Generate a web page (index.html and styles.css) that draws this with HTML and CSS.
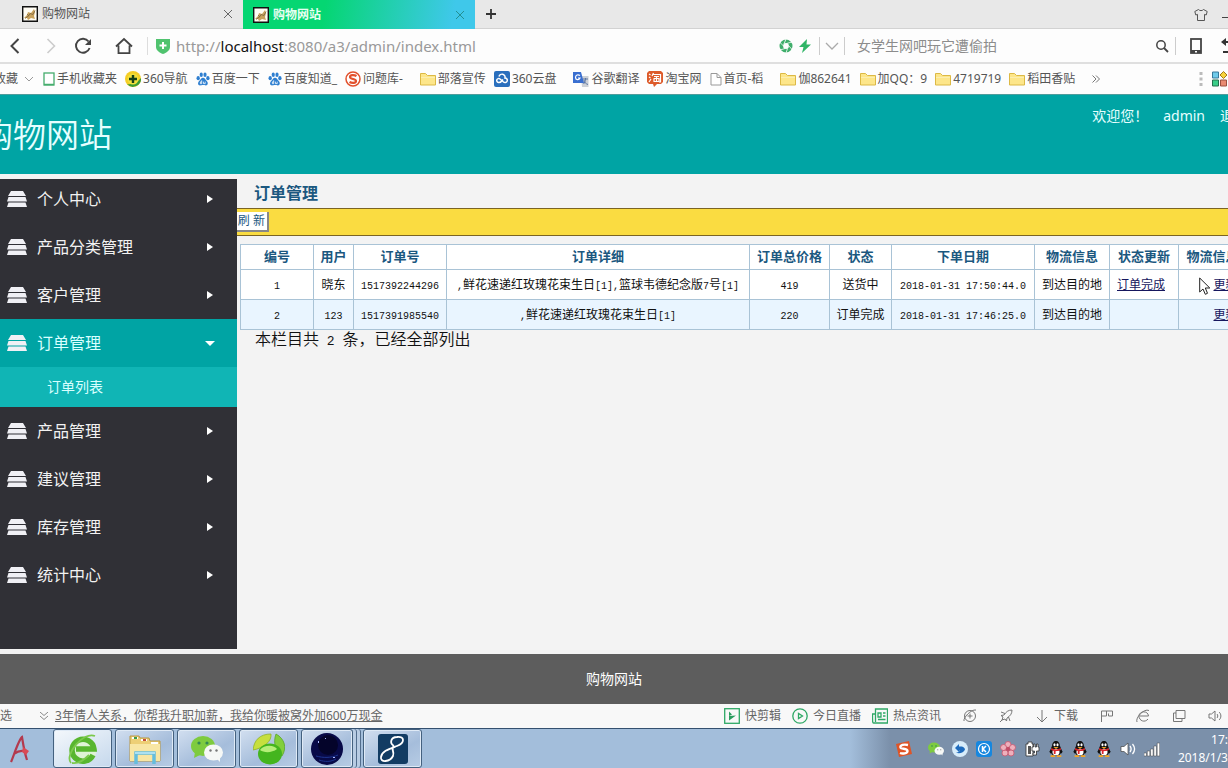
FILE: index.html
```html
<!DOCTYPE html>
<html lang="zh-CN">
<head>
<meta charset="utf-8">
<title>购物网站</title>
<link rel="stylesheet" href="styles.css">
</head>
<body>
<svg class="defs" aria-hidden="true">
  <symbol id="cat" viewBox="0 0 16 16"><path fill="#fffdf5" stroke="#111" stroke-width="1.4" d="M.7.7h14.6v14.6H.7z"/><path fill="#c9a25c" d="M2 12l3-3 1-3 3 1 3-4 1 3-1 4 1 3-4-1-3 2-1-2z"/><path fill="none" stroke="#7b6440" stroke-width=".8" d="M3 12.500l4-3 1-2 3 1 2-4M5 8l2 2"/></symbol>
  <symbol id="x" viewBox="0 0 10 10"><path d="M1 1l8 8M9 1L1 9" fill="none" stroke="currentColor"/></symbol>
  <symbol id="folder" viewBox="0 0 16 16"><path fill="#fde68a" stroke="#dcb945" d="M.5 14V2.500h5l2 2h8V14z"/><path fill="#fbeeb0" d="M1 6h14v1H1z"/></symbol>
  <symbol id="paw" viewBox="0 0 16 16"><g fill="#2f7fd0"><ellipse cx="2.500" cy="7" rx="1.900" ry="2.400"/><ellipse cx="6" cy="3.200" rx="1.800" ry="2.500"/><ellipse cx="10.300" cy="3.200" rx="1.800" ry="2.500"/><ellipse cx="13.600" cy="7" rx="1.900" ry="2.400"/><path d="M8 6.500c2.200 0 2.800 2.200 4.300 3.800 2 2 1.300 5-1 5-1.500 0-2-.4-3.300-.4s-2 .4-3.400.4c-2.500 0-3-3-1-5C5.200 8.700 5.800 6.500 8 6.500z"/></g><path d="M6.500 9.500v3.800h-1.500v-2h1.500M8.500 11v2.300h2V11" fill="none" stroke="#fff" stroke-width=".9"/></symbol>
  <symbol id="layers" viewBox="0 0 20 16"><path fill="#f0f0f5" d="M4 0h12l3 5H1zM1.500 6h17L20 10.500H0zM1.500 11.500h17L20 16H0z"/></symbol>
  <symbol id="wechat" viewBox="0 0 32 26"><ellipse cx="12" cy="10" rx="12" ry="10" fill="#7ecb3f"/><path fill="#7ecb3f" d="M4 16l-1 6 6-3z"/><circle cx="8" cy="7" r="1.600" fill="#385"/><circle cx="16" cy="7" r="1.600" fill="#385"/><ellipse cx="22.500" cy="16.500" rx="9.500" ry="8" fill="#f6f8f6"/><path fill="#f6f8f6" d="M25 22l4 4v-6z"/><circle cx="19.500" cy="14.500" r="1.200" fill="#777"/><circle cx="25.500" cy="14.500" r="1.200" fill="#777"/></symbol>
  <symbol id="qq" viewBox="0 0 16 18"><ellipse cx="8" cy="10.500" rx="6" ry="6.500" fill="#111"/><path fill="#111" d="M3.500 7C3.500 2 5.500 0 8 0s4.500 2 4.500 7l3 5-1.500 2-12 0L.5 12z"/><ellipse cx="8" cy="12.500" rx="4" ry="3.800" fill="#fff"/><ellipse cx="6.300" cy="4.200" rx="1.200" ry="1.700" fill="#fff"/><ellipse cx="9.700" cy="4.200" rx="1.200" ry="1.700" fill="#fff"/><path fill="#f5a623" d="M5 6.800h6L8 8.600zM2 16h5v2H2zM9 16h5v2H9z"/><path fill="#d8262c" d="M2.500 8c3.500 2 7.500 2 11 0v2.200c-2 1-4 1.300-6 1.300v3H5.500v-3.200l-3-1.200z"/></symbol>
</svg>

<header class="browser">
  <div class="tabs" role="tablist">
    <div class="tab" role="tab"><svg class="i16"><use href="#cat"/></svg><span>购物网站</span><button class="close" aria-label="关闭"><svg class="i10"><use href="#x"/></svg></button></div>
    <div class="tab active" role="tab" aria-selected="true"><svg class="i16"><use href="#cat"/></svg><span>购物网站</span><button class="close" aria-label="关闭"><svg class="i10"><use href="#x"/></svg></button></div>
    <button class="newtab" aria-label="新标签页"><svg class="i12" viewBox="0 0 12 12"><path d="M6 1v10M1 6h10" stroke="#333" stroke-width="1.800"/></svg></button>
    <div class="winbtns">
      <button aria-label="皮肤"><svg class="i14" viewBox="0 0 14 14"><path fill="none" stroke="#555" d="M4.500 1.500L.8 3.500l1 3.500 1.700-.6v6.100h7V6.400l1.700.6 1-3.500-3.700-2c-1.200 1.500-3.800 1.500-5 0z"/></svg></button>
      <button aria-label="最小化"><svg class="i14" viewBox="0 0 14 14"><path stroke="#444" d="M0 9.500h14"/></svg></button>
    </div>
  </div>

  <div class="toolbar">
    <div class="nav">
      <button aria-label="后退"><svg class="i18" viewBox="0 0 18 18"><path fill="none" stroke="#444" stroke-width="2" d="M12.500 2L5.500 9l7 7"/></svg></button>
      <button aria-label="前进"><svg class="i18" viewBox="0 0 18 18"><path fill="none" stroke="#ccc" stroke-width="1.600" d="M5.500 2l7 7-7 7"/></svg></button>
      <button aria-label="刷新"><svg class="i18" viewBox="0 0 18 18"><path fill="none" stroke="#444" stroke-width="1.900" d="M15.600 11a7 7 0 1 1-1-6.500"/><path fill="#444" d="M17 2v6h-6z"/></svg></button>
      <button aria-label="主页"><svg class="i18" viewBox="0 0 18 18"><path fill="none" stroke="#444" stroke-width="1.800" d="M1 9.500L9 2l8 7.500M3.500 8.500v7.600h11V8.500"/></svg></button>
    </div>
    <div class="address">
      <svg class="i16" viewBox="0 0 16 16"><path fill="#50c36f" d="M1 1h14v8c0 3-3 5.500-7 7-4-1.500-7-4-7-7z"/><path stroke="#fff" stroke-width="2" d="M8 4v7M4.500 7.500h7"/></svg>
      <div class="url" role="textbox" aria-label="地址">http://<b>localhost</b>:8080/a3/admin/index.html</div>
      <svg class="i14" viewBox="0 0 14 14"><circle cx="7" cy="7" r="4.700" fill="none" stroke="#3fae6b" stroke-width="3.600"/><path stroke="#fff" stroke-width=".8" d="M5 5L7 0M7.500 4.500L13 3M9.500 6.500L13.500 11M8.500 9.500L7 14M6 9.500L1 11M4.500 7L.5 3"/></svg>
      <svg class="i14" viewBox="0 0 14 14"><path fill="#30b566" d="M9 0L1 8h4.500L4 14l9-8.500H8.500z"/></svg>
    </div>
    <button class="drop" aria-label="展开"><svg class="i14" viewBox="0 0 14 14"><path fill="none" stroke="#aaa" stroke-width="1.300" d="M1 4l6 6 6-6"/></svg></button>
    <form class="search">
      <input type="search" aria-label="搜索" placeholder="女学生网吧玩它遭偷拍">
      <button type="button" aria-label="搜索"><svg class="i14" viewBox="0 0 14 14"><circle cx="6" cy="6" r="4.200" fill="none" stroke="#444" stroke-width="1.500"/><path stroke="#444" stroke-width="1.800" d="M9 9l4 4"/></svg></button>
    </form>
    <div class="extras">
      <button aria-label="手机"><svg class="i18" viewBox="0 0 18 18"><rect x="4" y="2" width="10" height="14" fill="none" stroke="#444" stroke-width="1.800"/><path fill="#444" d="M4 13h10v3H4z"/><path fill="#fff" d="M8 14h2v1.500H8z"/></svg></button>
      <button aria-label="恢复"><svg class="i18" viewBox="0 0 18 18"><path fill="none" stroke="#333" stroke-width="2" d="M2 5h10c5 0 5 10 0 10H2"/><path fill="#333" d="M0 5l5-4v8z"/></svg></button>
    </div>
  </div>

  <nav class="bookmarks">
    <a href="#" class="fav">收藏</a>
    <svg class="i8" viewBox="0 0 8 8"><path fill="none" stroke="#999" d="M0 2l4 4 4-4"/></svg>
    <a href="#"><svg class="phone" viewBox="0 0 12 16"><rect x="1" y="2" width="10" height="12" fill="#fff" stroke="#45ad6d" stroke-width="1.300"/><path stroke="#45ad6d" stroke-width="1.500" d="M1 13.500h10"/></svg>手机收藏夹</a>
    <a href="#"><svg class="i16" viewBox="0 0 16 16"><circle cx="8" cy="8" r="8" fill="#f5cd25"/><path fill="#3c9b36" d="M2 13A8 8 0 0 0 16 7C12 12 6 14 2 13z"/><circle cx="8" cy="8" r="5.500" fill="#f2e03c"/><path stroke="#153f18" stroke-width="2.400" d="M8 4v8M4 8h8"/></svg>360导航</a>
    <a href="#"><svg class="i14"><use href="#paw"/></svg>百度一下</a>
    <a href="#"><svg class="i14"><use href="#paw"/></svg>百度知道_</a>
    <a href="#" class="wide"><svg class="i16" viewBox="0 0 16 16"><circle cx="8" cy="8" r="7" fill="#fff" stroke="#e2512d" stroke-width="1.500"/><path fill="none" stroke="#e2512d" stroke-width="2.200" d="M11.500 5C9 3.500 5 3.800 5 6c0 2.500 6 1.500 6 4 0 2.300-4 2.500-6.500 1"/></svg>问题库-</a>
    <a href="#"><svg class="i16"><use href="#folder"/></svg>部落宣传</a>
    <a href="#" class="wide"><svg class="i16" viewBox="0 0 16 16"><rect width="16" height="16" rx="2" fill="#2a6fbd"/><path fill="none" stroke="#fff" stroke-width="1.500" d="M5 5.500a3 3 0 0 1 6 1.500 2.300 2.300 0 1 1-1.500 4L6 8a2 2 0 1 0-1 3.500c2 0 3-1.500 4-3"/></svg>360云盘</a>
    <a href="#"><svg class="i16" viewBox="0 0 16 16"><path fill="#ccd0d6" d="M8 5h7.500v11H9z"/><path fill="#3a6fd0" d="M0 1h8l3 11H0z"/><path fill="none" stroke="#fff" stroke-width="1.200" d="M7 4.500C5 3 2.500 4 2.500 6.500S6 9.500 7 7H5"/><path fill="none" stroke="#5c76a3" d="M10 8h5M12.500 7v1c0 2-1 4-2 5M11 9c0 2 2 4 4 4.500"/></svg>谷歌翻译</a>
    <a href="#"><svg class="i16" viewBox="0 0 16 16"><path fill="#dd5b2b" d="M2 0h12l2 2v9l-2 2h-4l-3 3-1-3H2l-2-2V2z"/><path fill="none" stroke="#fff" stroke-width="1.200" d="M2 3l1.500 1M2 6l1.500 1M2 11l2-3M6.500 2L5 5M6 3.500h7.500V11H12M7 5.500h5M6.500 7.500h6M9.500 5.500V10M7 8v2.500h5V8"/></svg>淘宝网</a>
    <a href="#" class="wide"><svg class="phone" viewBox="0 0 12 16"><path fill="#fff" stroke="#999" d="M1 2.500h6l4 4v7.500H1zM7 2.500v4h4"/></svg>首页-稻</a>
    <a href="#"><svg class="i16"><use href="#folder"/></svg>伽862641</a>
    <a href="#"><svg class="i16"><use href="#folder"/></svg>加QQ：9</a>
    <a href="#"><svg class="i16"><use href="#folder"/></svg>4719719</a>
    <a href="#" class="wide"><svg class="i16"><use href="#folder"/></svg>稻田香贴</a>
    <button aria-label="更多"><svg class="i8" viewBox="0 0 8 8"><path fill="none" stroke="#777" d="M.5.5L4 4 .5 7.500M4 .5L7.500 4 4 7.500"/></svg></button>
    <div class="apps">
      <svg class="dots" viewBox="0 0 4 16"><path stroke="#bbb" stroke-width="3" d="M2 1v3M2 6.500v3M2 12v3"/></svg>
      <svg class="i16" viewBox="0 0 16 16"><path fill="#6fcbea" stroke="#38799a" d="M.5 1h6v6h-6z"/><path fill="#f7d33d" stroke="#a27a1a" d="M11.500.5l3.500 3.500-3.500 3.500L8 4z"/><path fill="#39ce88" stroke="#24704e" d="M.5 9h6v6h-6z"/><path fill="#e98a72" stroke="#9a5040" d="M8.500 9h6v6h-6z"/></svg>
    </div>
  </nav>
</header>

<div class="banner">
  <h1>购物网站</h1>
  <div class="user"><span>欢迎您！</span><a href="#">admin</a><a href="#">退出</a></div>
</div>

<div class="body">
  <nav class="side">
    <ul>
      <li><a href="#"><svg class="layers"><use href="#layers"/></svg>个人中心<i class="arrow"></i></a></li>
      <li><a href="#"><svg class="layers"><use href="#layers"/></svg>产品分类管理<i class="arrow"></i></a></li>
      <li><a href="#"><svg class="layers"><use href="#layers"/></svg>客户管理<i class="arrow"></i></a></li>
      <li><a href="#" class="open"><svg class="layers"><use href="#layers"/></svg>订单管理<i class="arrow down"></i></a>
        <a href="#" class="sub">订单列表</a></li>
      <li><a href="#"><svg class="layers"><use href="#layers"/></svg>产品管理<i class="arrow"></i></a></li>
      <li><a href="#"><svg class="layers"><use href="#layers"/></svg>建议管理<i class="arrow"></i></a></li>
      <li><a href="#"><svg class="layers"><use href="#layers"/></svg>库存管理<i class="arrow"></i></a></li>
      <li><a href="#"><svg class="layers"><use href="#layers"/></svg>统计中心<i class="arrow"></i></a></li>
    </ul>
  </nav>
  <main>
    <h2>订单管理</h2>
    <div class="actions"><button>刷 新</button></div>
    <table>
      <colgroup><col class="c-id"><col class="c-user"><col class="c-no"><col class="c-detail"><col class="c-price"><col class="c-state"><col class="c-date"><col class="c-ship"><col class="c-set"><col class="c-upd"></colgroup>
      <thead><tr><th>编号</th><th>用户</th><th>订单号</th><th>订单详细</th><th>订单总价格</th><th>状态</th><th>下单日期</th><th>物流信息</th><th>状态更新</th><th>物流信息更新</th></tr></thead>
      <tbody>
        <tr><td><span class="n">1</span></td><td>晓东</td><td><span class="n">1517392244296</span></td><td><span class="n">,</span>鲜花速递红玫瑰花束生日<span class="n">[1],</span>篮球韦德纪念版<span class="n">7</span>号<span class="n">[1]</span></td><td><span class="n">419</span></td><td>送货中</td><td><span class="n">2018-01-31 17:50:44.0</span></td><td>到达目的地</td><td class="left"><a href="#">订单完成</a></td><td class="has-cursor"><a href="#">更新</a><svg class="cursor" viewBox="0 0 12 18"><path fill="#fff" stroke="#222" d="M.7 1v14l3.300-3 2.300 5.300 2.200-1L6.300 11h4.500z"/></svg></td></tr>
        <tr><td><span class="n">2</span></td><td><span class="n">123</span></td><td><span class="n">1517391985540</span></td><td><span class="n">,</span>鲜花速递红玫瑰花束生日<span class="n">[1]</span></td><td><span class="n">220</span></td><td>订单完成</td><td><span class="n">2018-01-31 17:46:25.0</span></td><td>到达目的地</td><td></td><td><a href="#">更新</a></td></tr>
      </tbody>
    </table>
    <p class="summary">本栏目共<span class="num"> 2 </span>条，已经全部列出</p>
  </main>
</div>

<footer class="foot">购物网站</footer>

<div class="status">
  <span class="pick">选</span>
  <svg class="i8" viewBox="0 0 8 8"><path fill="none" stroke="#888" d="M0 0l4 3.500L8 0M0 4l4 3.500L8 4"/></svg>
  <a href="#" class="news">3年情人关系，你帮我升职加薪，我给你暖被窝外加600万现金</a>
  <div class="tools">
    <button><svg class="i16" viewBox="0 0 16 16"><rect x=".7" y=".7" width="14.600" height="14.600" fill="none" stroke="#2fa866" stroke-width="1.300"/><path fill="#2a9c5d" d="M5 3.500l3 3L5 8zM5 8l7-.5L5 12.500z"/></svg>快剪辑</button>
    <button><svg class="i16" viewBox="0 0 16 16"><circle cx="8" cy="8" r="7.200" fill="none" stroke="#2fa866" stroke-width="1.300"/><path fill="none" stroke="#2fa866" stroke-width="1.300" d="M6.500 5.500v5l4-2.500z"/></svg>今日直播</button>
    <button><svg class="i16" viewBox="0 0 16 16"><path fill="none" stroke="#2fa866" stroke-width="1.300" d="M3.500 1h12v14h-14c-1 0-1-1-1-9h3zM3.500 6v8M6 5h3v4H6zM11 5h2.500M11 8h2.500M6 11.500h7.500"/></svg>热点资讯</button>
    <button aria-label="加速"><svg class="i14" viewBox="0 0 14 14"><g fill="none" stroke="#777"><circle cx="7" cy="7" r="5.500"/><path d="M4.500 7h5M7 4.500v5M1 12C0 9 8 0 13 1"/></g></svg></button>
    <button aria-label="火箭"><svg class="i14" viewBox="0 0 14 14"><path fill="none" stroke="#777" d="M13 1c-4 0-6 2-8 5L2 6.500l2 1.500-1 3 3-1 1.500 2 .5-3c3-2 5-4 5-8zM1 13l2.500-2.500M2 3l4 1.500M11 12L9.500 8"/></svg></button>
    <button><svg class="i14" viewBox="0 0 14 14"><path fill="none" stroke="#777" d="M7 1v12M2 8l5 5 5-5"/></svg>下载</button>
    <button aria-label="标记"><svg class="i14" viewBox="0 0 14 14"><path fill="none" stroke="#777" d="M1.500 13V2h11v5h-4V4.500M1.500 7h5V2"/></svg></button>
    <button aria-label="内核"><svg class="i14" viewBox="0 0 14 14"><path fill="none" stroke="#777" d="M12 10c-3 4-9 2-9-3s9-6 9.500 0H4M1 13C-1 9 8-1 13 1.500"/></svg></button>
    <button aria-label="窗口"><svg class="i14" viewBox="0 0 14 14"><path fill="none" stroke="#777" d="M4 1.500h9v8H4zM4 4H1.500v8.500H10v-3"/></svg></button>
    <button aria-label="声音"><svg class="i14" viewBox="0 0 14 14"><path fill="none" stroke="#777" d="M1 5h2.500L7 2v10L3.500 9H1zM9 5c1 1 1 3 0 4M11 3c2.500 2 2.500 6 0 8"/></svg></button>
  </div>
</div>

<div class="taskbar">
  <button class="adobe" aria-label="A"><svg class="i32" viewBox="0 0 32 32"><path fill="none" stroke="#b33a4e" stroke-width="2.200" d="M7 29C10 22 15 6 18 4c1 6 2 14 5 23M10 21c5-4 9-4 13-2"/><path fill="#d94a55" d="M19 14l6 4-3 4-4-3z"/></svg></button>
  <button class="task on" aria-label="360浏览器"><svg class="i32" viewBox="0 0 32 32"><circle cx="16" cy="17" r="13.500" fill="#dff3d6"/><path fill="none" stroke="#58b62f" stroke-width="5.500" d="M26 22A11 11 0 1 1 27 16H9"/><path fill="none" stroke="#7cc94c" stroke-width="1.800" d="M4 30C-3 22 16-2 28 3M5 30c5 1 12-3 17-8"/></svg></button>
  <button class="task" aria-label="资源管理器"><svg class="i32" viewBox="0 0 32 32"><path fill="#edcf76" stroke="#b89745" d="M1 3h9l1 2h9l1 3h10v20H1z"/><path fill="#fff" d="M3 4h6v2H3zM12 6h6v2h-6zM22 9h7v2h-7z"/><path fill="#f8e6a4" d="M1 11h30v17H1z"/><path fill="#3d9b46" d="M5 4h3v2H5z"/><path fill="#c54b36" d="M14 6h3v2h-3z"/><path fill="none" stroke="#65bddd" stroke-width="3.500" d="M7 31V20h18v11"/><path stroke="#c5edf9" stroke-width="1.500" d="M6 20h20"/></svg></button>
  <button class="task" aria-label="微信"><svg class="i32"><use href="#wechat"/></svg></button>
  <button class="task" aria-label="加速器"><svg class="i32" viewBox="0 0 32 32"><path fill="#c7df3e" stroke="#8fb32a" stroke-width=".8" d="M0 17C1 7 7 1 18 1c1 7-7 14-18 16z"/><path fill="#82cf3b" stroke="#5aa52a" stroke-width=".8" d="M23 1c9 5 11 14 6 22-7-4-9-14-6-22z"/><ellipse cx="17" cy="21" rx="12" ry="10.500" fill="#44b51e"/><path fill="#b6ee78" d="M7 17c4-6 15-5 17-1-5 4-13 4-17 1z"/></svg></button>
  <button class="task stack" aria-label="Eclipse"><svg class="i32" viewBox="0 0 32 32"><circle cx="16" cy="16" r="16" fill="#080a48"/><circle cx="17" cy="12" r="10" fill="#04042a"/><path fill="none" stroke="#1d3590" d="M8 27c6 2 12 2 17-1M5 23c7 2 15 2 22-1"/><path fill="#aab8ff" d="M7 8h1v2H7zM14 5h1v1h-1zM22 24h2v1h-2z"/></svg></button>
  <button class="task" aria-label="8"><svg class="i32" viewBox="0 0 32 32"><rect x="1" y="1" width="30" height="30" rx="3" fill="#123c63"/><path fill="none" stroke="#fff" stroke-width="1.800" d="M17 13C12 10 14 4 20 4c8-1 8 6 0 9S5 18 4 24c-1 6 9 5 12-1 2-5-3-7 1-10"/></svg></button>
  <div class="tray">
    <svg class="i16 first" viewBox="0 0 16 16"><path fill="#df5426" d="M0 3L13 0l3 13L3 16z"/><path fill="none" stroke="#fff" stroke-width="2.400" d="M12 4C8 3 4 4 4.500 6.500c.5 2 7 .5 7 3.500 0 2.500-5 3-7.500 2"/></svg>
    <svg class="i16"><use href="#wechat"/></svg>
    <svg class="i16" viewBox="0 0 16 16"><circle cx="8" cy="8" r="8" fill="#d7ecfa"/><path fill="#1e6bbd" d="M3 7l4-4v2.500c5-.5 6 2 6 3-1 3-6 5-9 3 3 0 4-1.500 3-2.500v2z"/></svg>
    <svg class="i16" viewBox="0 0 16 16"><rect width="16" height="16" rx="3" fill="#1687df"/><circle cx="8" cy="8" r="5.500" fill="none" stroke="#fff" stroke-width="1.200"/><path fill="none" stroke="#fff" stroke-width="1.500" d="M6.500 5v6M10 5L7 8l3 3"/></svg>
    <svg class="i16" viewBox="0 0 16 16"><g fill="#eeb0bc" stroke="#c9556e" stroke-width=".8"><circle cx="8" cy="3.500" r="3"/><circle cx="12.500" cy="6.500" r="3"/><circle cx="11" cy="12" r="3"/><circle cx="5" cy="12" r="3"/><circle cx="3.500" cy="6.500" r="3"/></g><circle cx="8" cy="8" r="2" fill="#c64b65"/></svg>
    <svg class="i16" viewBox="0 0 16 16"><path fill="#fff" stroke="#333" stroke-width=".8" d="M2 3h2V1h4v2h1v12H2z"/><path fill="#555" d="M4 5h3v8H4z"/><path fill="#fff" stroke="#333" stroke-width=".8" d="M8 6h1.500V3H11v3h1.500V3H14v3h1v4h-2.500v4H9v-2h1.500v-2H8z"/></svg>
    <svg class="i16"><use href="#qq"/></svg>
    <svg class="i16"><use href="#qq"/></svg>
    <svg class="i16"><use href="#qq"/></svg>
    <svg class="i16" viewBox="0 0 16 16"><path fill="#fff" stroke="#444" stroke-width=".7" d="M1 5.500h3L8 2v12L4 10.500H1z"/><path fill="none" stroke="#fff" stroke-width="1.300" d="M10 5c1.500 2 1.500 4 0 6M12.500 3c2.500 3 2.500 7 0 10"/></svg>
    <svg class="i16" viewBox="0 0 16 16"><path fill="#fff" stroke="#444" stroke-width=".5" d="M0 12h2.500v3H0zM3.300 10h2.500v5H3.300zM6.600 8h2.500v7H6.600zM9.900 5h2.500v10H9.900zM13.200 2h2.500v13h-2.500z"/></svg>
    <div class="clock"><span>17:</span><span>2018/1/3</span></div>
  </div>
</div>
</body>
</html>
```
FILE: styles.css
```css
* { box-sizing: border-box; }
body {
  margin: 0;
  min-height: 100vh;
  display: flex;
  flex-direction: column;
  overflow-x: hidden;
  background: #f3f3f3;
  font: 12px/16px "Noto Sans", "Noto Sans CJK SC", sans-serif;
  color: #555;
}
a { color: inherit; text-decoration: none; }
button { border: 0; padding: 0; background: none; font: inherit; color: inherit; display: flex; align-items: center; }
svg { flex: none; display: block; }
.defs { position: absolute; width: 0; height: 0; }
.i8 { width: 8px; height: 8px; }
.i10 { width: 10px; height: 10px; }
.i12 { width: 12px; height: 12px; }
.i14 { width: 14px; height: 14px; }
.i16 { width: 16px; height: 16px; }
.i18 { width: 18px; height: 18px; }
.i32 { width: 32px; height: 32px; }

/* browser chrome */
.tabs { display: flex; height: 29px; background: #e8e8e8; border-bottom: 1px solid #d2d2d2; }
.tab { display: flex; align-items: center; gap: 4px; width: 243px; padding: 0 10px 0 22px; }
.tab.active { width: 232px; padding-left: 10px; height: 29px; color: #e8fff2; font-weight: bold; background: linear-gradient(100deg, #05d672 35%, #3fc8ea 90%); }
.close { margin-left: auto; color: #666; }
.active .close { color: #238f92; }
.newtab { margin-left: 10px; }
.winbtns { display: flex; gap: 14px; margin: 2px -8px 0 auto; }
.toolbar { display: flex; align-items: center; height: 35px; background: #fdfdfd; border-bottom: 2px solid #dfdfdf; }
.nav { display: flex; gap: 18px; padding: 0 16px 0 7px; border-right: 1px solid #ddd; }
.nav button:nth-child(3) { margin-left: -4px; }
.nav button:nth-child(4) { margin-left: 5px; }
.nav { margin-right: -1px; padding-right: 14px; }
.nav button:first-child { margin-left: -1px; }
.address { display: flex; align-items: center; gap: 5px; flex: 1; padding: 0 7px 0 8px; }
.url { flex: 1; font-size: 15px; line-height: 20px; color: #999; }
.url b { font-weight: normal; color: #111; }
.drop { padding: 2px 5px; border: solid #ccc; border-width: 0 1px; }
.search { display: flex; align-items: center; width: 331px; height: 18px; padding: 0 6px 0 12px; border-right: 1px solid #ccc; }
.search input { flex: 1; min-width: 0; padding: 0; border: 0; outline: 0; background: none; font: inherit; font-size: 14px; line-height: 18px; }
.search input::placeholder { color: #8c8c8c; opacity: 1; }
.extras { display: flex; gap: 16px; margin-right: -11px; padding-left: 11px; }
.bookmarks { display: flex; align-items: center; gap: 8px; height: 31px; background: #fdfdfd; border-bottom: 1px solid #4f9c9c; white-space: nowrap; }
.bookmarks a { display: flex; align-items: center; gap: 2px; }
.bookmarks .fav { margin-left: -6px; }
.bookmarks .fav + svg { margin: 0 2px 0 -1px; }
.bookmarks .wide { margin-right: 9px; }
.phone { width: 12px; height: 16px; }
.apps { display: flex; gap: 9px; margin-left: auto; }
.dots { width: 4px; height: 16px; }

/* page header */
.banner { display: flex; justify-content: space-between; height: 79px; background: #00a4a4; color: #e6ffff; }
.banner h1 { margin: 0 0 0 -20px; font-size: 33px; line-height: 80px; font-weight: 350; }
.user { display: flex; gap: 15px; margin-right: -20px; padding-top: 11px; font-size: 14px; line-height: 20px; white-space: nowrap; }

/* body */
.body { display: flex; flex: 1; margin: 5px 0; min-width: 0; }
.side { flex: 0 0 237px; background: #303036; overflow: hidden; }
.side ul { margin: -4px 0 0; padding: 0; list-style: none; }
.side a { display: flex; align-items: center; gap: 10px; height: 48px; padding: 0 22px 0 7px; color: #f2f2f2; font-size: 16px; }
.side .layers { width: 20px; height: 16px; }
.side .open { background: #00a4a4; color: #d8ffff; }
.side .sub { height: 40px; padding-left: 47px; background: #10b5b5; color: #d8ffff; font-size: 14px; }
.arrow { margin-left: auto; width: 8px; border: solid transparent; border-width: 4px 0 4px 6px; border-left-color: #fff; }
.arrow.down { width: 10px; border-width: 5px 5px 0; border-color: #fff transparent transparent; }
main { flex: 1; min-width: 0; overflow: hidden; font-family: "Liberation Sans", "Noto Sans CJK SC", sans-serif; color: #111; }
main h2 { margin: 0; padding-left: 17px; font-size: 16px; line-height: 29px; color: #1b587f; }
.actions { height: 28px; padding-top: 3px; background: #fadc41; border: solid #7b6423; border-width: 1px 0; }
.actions button { justify-content: flex-end; width: 32px; height: 20px; padding-right: 2px; background: #fff; border: solid #888; border-width: 0 2px 2px 0; color: #1b587f; white-space: nowrap; font-family: inherit; }
table { table-layout: fixed; width: 1033px; margin: 8px 0 0 3px; border-collapse: collapse; background: #fff; }
.c-id { width: 73px; }
.c-user { width: 40px; }
.c-no { width: 93px; }
.c-detail { width: 303px; }
.c-price { width: 80px; }
.c-state { width: 62px; }
.c-date { width: 143px; }
.c-ship { width: 75px; }
.c-set { width: 69px; }
.c-upd { width: 94px; }
th, td { padding: 0; border: 1px solid #a9c3d6; text-align: center; white-space: nowrap; }
th { height: 25px; font-size: 13px; color: #1b587f; }
td { height: 30px; font-size: 12px; }
td.left { text-align: left; padding-left: 7px; }
tbody tr:nth-child(2) { background: #e9f5ff; }
td a { color: #16165e; text-decoration: underline; }
.n { font: 10px "Liberation Mono", monospace; }
.has-cursor { position: relative; }
.cursor { position: absolute; left: 20px; top: 7px; width: 12px; height: 18px; }
.summary { margin: 0; padding-left: 18px; font-size: 16px; line-height: 20px; font-weight: 350; }
.num { font: 13px "Liberation Mono", monospace; white-space: pre; }

.foot { height: 50px; background: #5d5d5d; color: #fff; font-size: 14px; line-height: 50px; text-align: center; }

/* browser status bar */
.status { display: flex; align-items: center; height: 24px; background: #f8f8f8; white-space: nowrap; color: #666; }
.status .pick { margin-right: 28px; }
.news { margin-left: 7px; text-decoration: underline; }
.tools { display: flex; gap: 22px; margin-left: auto; padding-right: 6px; }
.tools button { gap: 5px; }
.tools button:nth-child(-n+2) { margin-right: -11px; }

/* taskbar */
.taskbar { display: flex; gap: 3px; height: 40px; border-top: 1px solid #34506f; background: #a3bedb; overflow: hidden; }
.adobe { width: 50px; padding-left: 4px; }
.task { justify-content: center; width: 59px; border: 1px solid #44617f; border-radius: 3px; background: linear-gradient(150deg, #d2dff0, #a5bddb 60%, #b7cce4); box-shadow: inset 0 0 0 1px #dfeaf6; }
.task.on { background: linear-gradient(150deg, #f4f8fc, #c5d8ec); }
.task.stack { width: 52px; margin-right: 7px; box-shadow: inset 0 0 0 1px #dfeaf6, 3px 0 0 #b8cce3, 4px 0 0 #526d8d, 7px 0 0 #b8cce3, 8px 0 0 #526d8d; }
.tray { display: flex; align-items: center; gap: 8px; margin-left: auto; padding-left: 46px; background: linear-gradient(90deg, #a3bedb, #7b90aa 40px); color: #fff; }
.tray .first { margin-right: 8px; }
.clock { display: flex; flex-direction: column; align-items: flex-end; margin-left: 10px; line-height: 18px; }
```
